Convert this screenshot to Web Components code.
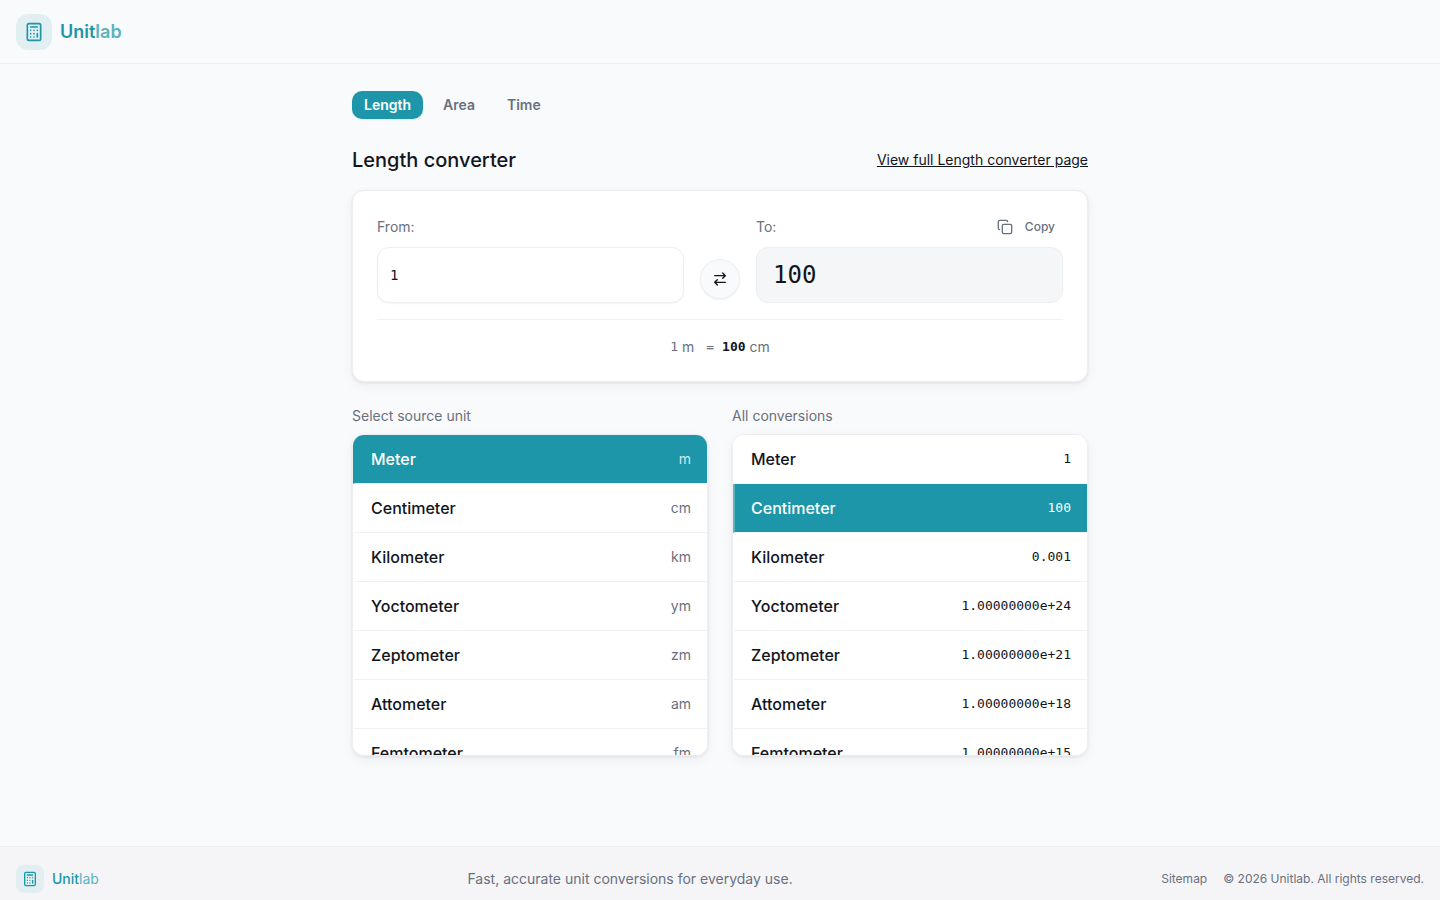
<!DOCTYPE html>
<html lang="en">
<head>
<meta charset="utf-8">
<meta name="viewport" content="width=device-width, initial-scale=1">
<title>Unitlab</title>
<style>
  :root {
    --bg: #f9fafc;
    --surface: #ffffff;
    --muted-bg: #f5f6f8;
    --text: #12151c;
    --muted: #69707d;
    --border: #eceef1;
    --divider: #f1f2f4;
    --primary: #1c96a8;
    --primary-light: #5bb3bf;
    --primary-soft: #e1eff3;
    --mono: "DejaVu Sans Mono", "Liberation Mono", monospace;
    --shadow: 0 1px 3px rgba(16, 24, 40, 0.08), 0 4px 12px rgba(16, 24, 40, 0.05);
  }

  body {
    margin: 0;
    background: var(--bg);
    color: var(--text);
    font-family: Inter, "Liberation Sans", sans-serif;
    font-size: 14px;
    line-height: 20px;
  }
</style>
</head>
<body>
<unit-app></unit-app>

<script>
class BrandLogo extends HTMLElement {

  constructor() {
    super();
    this.shadowDOM = this.attachShadow({mode: 'open'});
  }

  connectedCallback() {
    this.render();
  }

  render() {
    this.shadowDOM.innerHTML = `
      <style>
        :host {
          display: block;
        }

        a {
          display: inline-flex;
          align-items: center;
          gap: 8px;
          color: var(--primary);
          font-size: 18px;
          font-weight: 600;
          line-height: 28px;
          text-decoration: none;
        }

        .mark {
          display: flex;
          align-items: center;
          justify-content: center;
          width: 36px;
          height: 36px;
          border-radius: 12px;
          background-color: var(--primary-soft);
        }

        svg {
          width: 20px;
          height: 20px;
        }

        .light {
          color: var(--primary-light);
        }

        :host([small]) a {
          font-size: 14px;
          font-weight: 500;
        }

        :host([small]) .light {
          font-weight: 400;
        }

        :host([small]) .mark {
          width: 28px;
          height: 28px;
          border-radius: 8px;
        }

        :host([small]) svg {
          width: 16px;
          height: 16px;
        }
      </style>

      <a href="#">
        <span class="mark">
          <svg viewBox="0 0 24 24" fill="none" stroke="currentColor" stroke-width="2" stroke-linecap="round" stroke-linejoin="round" aria-hidden="true">
            <rect width="16" height="20" x="4" y="2" rx="2"/>
            <path d="M8 6h8M16 14v4M16 10h.01M12 10h.01M8 10h.01M12 14h.01M8 14h.01M12 18h.01M8 18h.01"/>
          </svg>
        </span>
        <span>Unit<span class="light">lab</span></span>
      </a>
    `;
  }
}

class AppHeader extends HTMLElement {

  constructor() {
    super();
    this.shadowDOM = this.attachShadow({mode: 'open'});
  }

  connectedCallback() {
    this.shadowDOM.innerHTML = `
      <style>
        :host {
          display: block;
        }

        header {
          display: flex;
          align-items: center;
          padding: 14px 16px 13px;
          border-bottom: 1px solid var(--border);
        }
      </style>

      <header><slot></slot></header>
    `;
  }
}

class CategoryTabs extends HTMLElement {

  constructor() {
    super();
    this.shadowDOM = this.attachShadow({mode: 'open'});
    this.tabs = ['Length', 'Area', 'Time'];
  }

  connectedCallback() {
    this.render();
  }

  render() {
    this.shadowDOM.innerHTML = `
      <style>
        :host {
          display: block;
        }

        nav {
          display: flex;
          gap: 8px;
          padding: 3px 0;
        }

        button {
          padding: 4px 12px;
          border: 0;
          border-radius: 10px;
          background: none;
          color: var(--muted);
          font: inherit;
          font-weight: 600;
          cursor: pointer;
        }

        button[aria-pressed="true"] {
          background-color: var(--primary);
          color: white;
          box-shadow: 0 1px 2px rgba(16, 24, 40, 0.08);
        }
      </style>

      <nav aria-label="Categories">
        ${this.tabs.map((tab, i) => `<button type="button" aria-pressed="${i === 0}">${tab}</button>`).join('')}
      </nav>
    `;
  }
}

class ConverterCard extends HTMLElement {

  constructor() {
    super();
    this.shadowDOM = this.attachShadow({mode: 'open'});
  }

  connectedCallback() {
    this.render();
  }

  render() {
    this.shadowDOM.innerHTML = `
      <style>
        :host {
          display: block;
          box-sizing: border-box;
          padding: 24px;
          border: 1px solid var(--border);
          border-radius: 12px;
          background-color: var(--surface);
          box-shadow: var(--shadow);
          color: var(--muted);
        }

        .fields {
          display: grid;
          grid-template-columns: 1fr auto 1fr;
          align-items: end;
          gap: 16px;
          padding-bottom: 16px;
          border-bottom: 1px solid var(--divider);
        }

        .field {
          display: flex;
          flex-direction: column;
          gap: 8px;
          min-width: 0;
        }

        .top {
          display: flex;
          align-items: center;
          justify-content: space-between;
          height: 24px;
        }

        input,
        output {
          display: flex;
          align-items: center;
          box-sizing: border-box;
          width: 100%;
          height: 56px;
          border: 1px solid var(--border);
          border-radius: 12px;
          color: var(--text);
          font-family: var(--mono);
        }

        input {
          padding: 0 12px;
          background-color: var(--surface);
          font-size: 14px;
          box-shadow: 0 1px 2px rgba(16, 24, 40, 0.04);
        }

        output {
          padding: 0 16px;
          background-color: var(--muted-bg);
          font-size: 24px;
        }

        button {
          display: flex;
          align-items: center;
          justify-content: center;
          border: 0;
          background: none;
          color: inherit;
          font: inherit;
          cursor: pointer;
        }

        .copy {
          gap: 12px;
          padding: 0 8px;
          font-size: 12px;
          font-weight: 500;
        }

        .swap {
          width: 40px;
          height: 40px;
          margin-bottom: 4px;
          padding: 0;
          border: 1px solid var(--border);
          border-radius: 50%;
          background-color: var(--bg);
          color: var(--text);
          box-shadow: 0 1px 2px rgba(16, 24, 40, 0.06);
        }

        svg {
          width: 16px;
          height: 16px;
        }

        .result {
          display: flex;
          justify-content: center;
          align-items: center;
          gap: 4px;
          margin: 0;
          padding-top: 17px;
        }

        .result span,
        .result b {
          font-family: var(--mono);
          font-size: 13px;
        }

        .equals {
          margin: 0 4px 0 8px;
        }

        .result b {
          color: var(--text);
        }
      </style>

      <div class="fields">
        <div class="field">
          <div class="top"><label for="from">From:</label></div>
          <input id="from" type="text" inputmode="decimal" value="1">
        </div>
        <button class="swap" type="button" aria-label="Swap units">
          <svg viewBox="0 0 24 24" fill="none" stroke="currentColor" stroke-width="2" stroke-linecap="round" stroke-linejoin="round">
            <path d="m16 3 4 4-4 4M20 7H4M8 21l-4-4 4-4M4 17h16"/>
          </svg>
        </button>
        <div class="field">
          <div class="top">
            <label for="to">To:</label>
            <button class="copy" type="button">
              <svg viewBox="0 0 24 24" fill="none" stroke="currentColor" stroke-width="2" stroke-linecap="round" stroke-linejoin="round" aria-hidden="true">
                <rect width="14" height="14" x="8" y="8" rx="2"/>
                <path d="M4 16c-1.1 0-2-.9-2-2V4c0-1.1.9-2 2-2h10c1.1 0 2 .9 2 2"/>
              </svg>
              Copy
            </button>
          </div>
          <output id="to" for="from">100</output>
        </div>
      </div>
      <p class="result"><span>1</span> m <span class="equals">=</span> <b>100</b> cm</p>
    `;
  }
}

class UnitList extends HTMLElement {

  constructor() {
    super();
    this.shadowDOM = this.attachShadow({mode: 'open'});
  }

  set rows(rows) {
    this._rows = rows;
    this.render();
  }

  row([name, value], i) {
    const active = i === Number(this.getAttribute('active'));
    const content = `<span>${name}</span><span class="value">${value}</span>`;
    if (this.hasAttribute('selectable')) {
      return `<li><button class="row" type="button" aria-pressed="${active}">${content}</button></li>`;
    }
    return `<li><div class="row ${active ? 'active' : ''}">${content}</div></li>`;
  }

  render() {
    this.shadowDOM.innerHTML = `
      <style>
        :host {
          display: flex;
          flex-direction: column;
          gap: 8px;
          min-width: 0;
        }

        h3 {
          margin: 0;
          color: var(--muted);
          font-size: 14px;
          font-weight: 400;
        }

        ul {
          max-height: 320px;
          margin: 0;
          padding: 0;
          overflow-y: auto;
          scrollbar-width: none;
          list-style: none;
          border: 1px solid var(--border);
          border-radius: 12px;
          background-color: var(--surface);
          box-shadow: var(--shadow);
        }

        .row {
          display: flex;
          align-items: center;
          justify-content: space-between;
          box-sizing: border-box;
          width: 100%;
          padding: 12px 16px;
          border: 0;
          border-left: 2px solid transparent;
          border-bottom: 1px solid var(--divider);
          background: none;
          color: var(--text);
          font: inherit;
          font-size: 16px;
          font-weight: 500;
          line-height: 24px;
          text-align: left;
        }

        button.row {
          cursor: pointer;
        }

        .value {
          font-family: var(--mono);
          font-size: 13px;
        }

        button .value {
          color: var(--muted);
          font-family: inherit;
          font-size: 14px;
          font-weight: 400;
        }

        .row.active,
        .row[aria-pressed="true"] {
          border-left-color: var(--primary);
          background-color: var(--primary);
          color: white;
        }

        .row.active {
          border-left-color: var(--primary-light);
        }

        .row[aria-pressed="true"] .value {
          color: #d2eaee;
        }
      </style>

      <h3><slot></slot></h3>
      <ul>${this._rows.map((row, i) => this.row(row, i)).join('')}</ul>
    `;
  }
}

class AppFooter extends HTMLElement {

  constructor() {
    super();
    this.shadowDOM = this.attachShadow({mode: 'open'});
  }

  connectedCallback() {
    this.shadowDOM.innerHTML = `
      <style>
        :host {
          display: block;
          color: var(--muted);
        }

        footer {
          display: flex;
          align-items: center;
          justify-content: space-between;
          gap: 16px;
          padding: 18px 16px 7px;
          border-top: 1px solid var(--border);
          background-color: #f5f5f8;
        }

        p {
          margin: 0;
        }

        .links {
          display: flex;
          gap: 16px;
          font-size: 12px;
        }

        a {
          color: inherit;
          text-decoration: none;
        }
      </style>

      <footer>
        <brand-logo small></brand-logo>
        <p>Fast, accurate unit conversions for everyday use.</p>
        <div class="links">
          <a href="#">Sitemap</a>
          <span>© 2026 Unitlab. All rights reserved.</span>
        </div>
      </footer>
    `;
  }
}

class UnitApp extends HTMLElement {

  constructor() {
    super();
    this.shadowDOM = this.attachShadow({mode: 'open'});
  }

  connectedCallback() {
    this.render();
  }

  render() {
    this.shadowDOM.innerHTML = `
      <style>
        :host {
          display: flex;
          flex-direction: column;
          min-height: 100vh;
        }

        main {
          display: flex;
          flex: 1;
          flex-direction: column;
          gap: 24px;
          box-sizing: border-box;
          width: 100%;
          max-width: 768px;
          margin: 0 auto;
          padding: 24px 16px;
        }

        section {
          display: flex;
          flex-direction: column;
          gap: 16px;
        }

        .title {
          display: flex;
          align-items: center;
          justify-content: space-between;
        }

        h2 {
          margin: 0;
          font-size: 20px;
          font-weight: 500;
          line-height: 28px;
        }

        a {
          color: inherit;
        }

        .lists {
          display: grid;
          grid-template-columns: 1fr 1fr;
          gap: 24px;
        }

        @media screen and (max-width: 600px) {
          .lists {
            grid-template-columns: 1fr;
          }
        }
      </style>

      <app-header><brand-logo></brand-logo></app-header>
      <main>
        <category-tabs></category-tabs>
        <section>
          <div class="title">
            <h2>Length converter</h2>
            <a href="#">View full Length converter page</a>
          </div>
          <converter-card></converter-card>
        </section>
        <div class="lists">
          <unit-list id="source" active="0" selectable>Select source unit</unit-list>
          <unit-list id="conversions" active="1">All conversions</unit-list>
        </div>
      </main>
      <app-footer></app-footer>
    `;

    this.shadowDOM.querySelector('#source').rows = [
      ['Meter', 'm'],
      ['Centimeter', 'cm'],
      ['Kilometer', 'km'],
      ['Yoctometer', 'ym'],
      ['Zeptometer', 'zm'],
      ['Attometer', 'am'],
      ['Femtometer', 'fm']
    ];
    this.shadowDOM.querySelector('#conversions').rows = [
      ['Meter', '1'],
      ['Centimeter', '100'],
      ['Kilometer', '0.001'],
      ['Yoctometer', '1.00000000e+24'],
      ['Zeptometer', '1.00000000e+21'],
      ['Attometer', '1.00000000e+18'],
      ['Femtometer', '1.00000000e+15']
    ];
  }
}

customElements.define('brand-logo', BrandLogo);
customElements.define('app-header', AppHeader);
customElements.define('category-tabs', CategoryTabs);
customElements.define('converter-card', ConverterCard);
customElements.define('unit-list', UnitList);
customElements.define('app-footer', AppFooter);
customElements.define('unit-app', UnitApp);
</script>
</body>
</html>
